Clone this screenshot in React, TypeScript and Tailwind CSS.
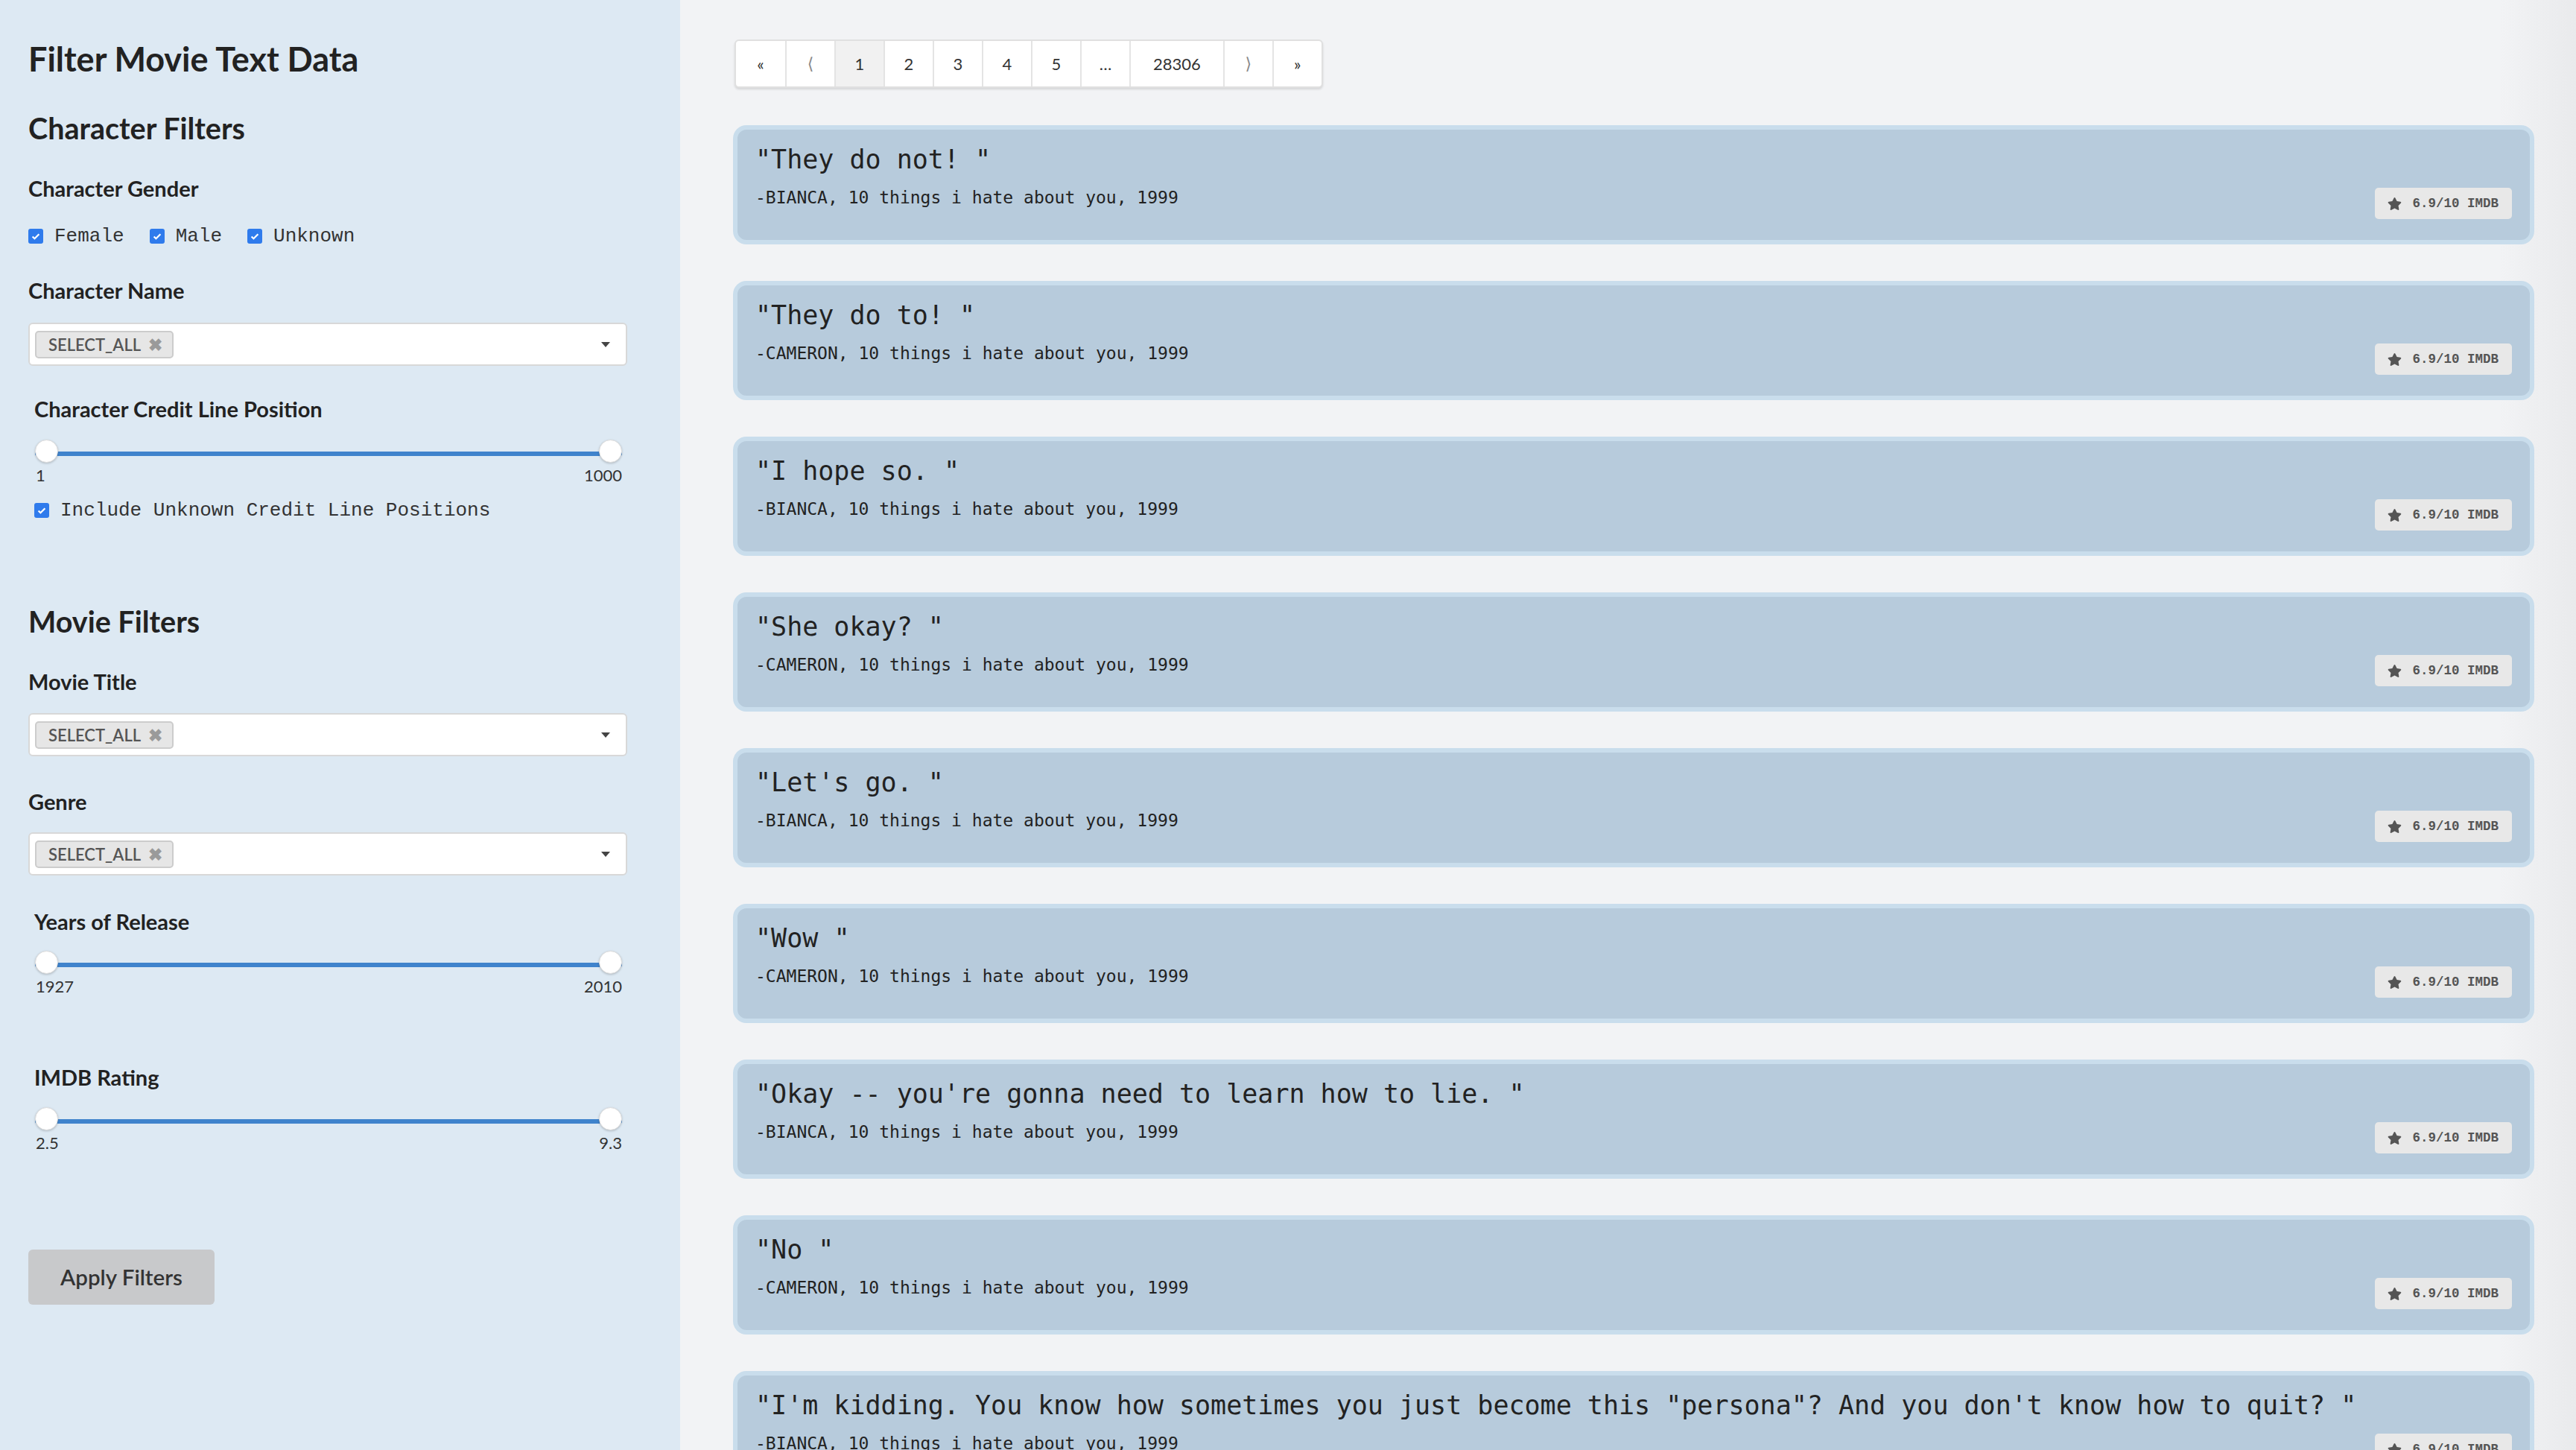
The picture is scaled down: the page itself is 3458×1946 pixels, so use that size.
import { FaStar } from "react-icons/fa";

interface quote {
  text: string;
  character: string;
}

const quotes: quote[] = [
  { text: "They do not! ", character: "BIANCA" },
  { text: "They do to! ", character: "CAMERON" },
  { text: "I hope so. ", character: "BIANCA" },
  { text: "She okay? ", character: "CAMERON" },
  { text: "Let's go. ", character: "BIANCA" },
  { text: "Wow ", character: "CAMERON" },
  { text: "Okay -- you're gonna need to learn how to lie. ", character: "BIANCA" },
  { text: "No ", character: "CAMERON" },
  {
    text: 'I\'m kidding. You know how sometimes you just become this "persona"? And you don\'t know how to quit? ',
    character: "BIANCA",
  },
];

const pages = ["«", "⟨", "1", "2", "3", "4", "5", "…", "28306", "⟩", "»"];

function Check() {
  return (
    <span className="flex h-[20px] w-[20px] shrink-0 items-center justify-center rounded-[3px] bg-[#2f7bec]">
      <svg viewBox="0 0 16 16" className="h-[14px] w-[14px]">
        <path d="M3 8.5l3.2 3.2L13 4.8" fill="none" stroke="white" strokeWidth="2.6" />
      </svg>
    </span>
  );
}

function CheckItem({ label }: { label: string }) {
  return (
    <label className="flex items-center gap-[15px]">
      <Check />
      <span className="font-['Liberation_Mono',monospace] text-[26px] leading-[34px] text-[#333]">
        {label}
      </span>
    </label>
  );
}

function SelectBox({ className }: { className: string }) {
  return (
    <div
      className={`flex h-[58px] w-[804px] shrink-0 items-center justify-between rounded-[6px] border-2 border-[#d8d8d8] bg-white pl-[7px] pr-[21px] ${className}`}
    >
      <span className="flex h-[37px] items-center gap-[10px] rounded-[5px] border-2 border-[#cccccc] bg-[#e6e6e6] pl-[16px] pr-[13px] text-[22px] font-semibold text-[#555]">
        SELECT_ALL
        <span className="text-[23px] leading-none text-[#9a9a9a]">✖</span>
      </span>
      <svg viewBox="0 0 12 7" className="h-[7px] w-[12px]">
        <path d="M0 0h12L6 7z" fill="#444" />
      </svg>
    </div>
  );
}

function RangeSlider({ min, max, className }: { min: string; max: string; className: string }) {
  return (
    <div className={`ml-[9px] w-[788px] shrink-0 ${className}`}>
      <div className="relative h-[32px]">
        <div className="absolute left-0 right-0 top-[16px] h-[6px] rounded-full bg-[#3f83cc]" />
        <div className="absolute left-0 top-0 h-[31px] w-[31px] rounded-full border border-[#dcdcdc] bg-white shadow-[0_1px_3px_rgba(0,0,0,0.2)]" />
        <div className="absolute right-0 top-0 h-[31px] w-[31px] rounded-full border border-[#dcdcdc] bg-white shadow-[0_1px_3px_rgba(0,0,0,0.2)]" />
      </div>
      <div className="mt-[3px] flex justify-between text-[22px] leading-[26px] text-[#333]">
        <span className="pl-[1px]">{min}</span>
        <span>{max}</span>
      </div>
    </div>
  );
}

function Sidebar() {
  return (
    <aside className="flex w-[913px] shrink-0 flex-col bg-[#dde9f3] pl-[38px] pt-[53px] font-['Lato',sans-serif] text-[#222]">
      <h1 className="text-[45px] font-bold leading-[52px]">Filter Movie Text Data</h1>
      <h2 className="mt-[44px] text-[39.5px] font-bold leading-[46px]">Character Filters</h2>
      <h3 className="mt-[41px] text-[29px] font-bold leading-[34px]">Character Gender</h3>
      <div className="mt-[30px] flex gap-[34px]">
        <CheckItem label="Female" />
        <CheckItem label="Male" />
        <CheckItem label="Unknown" />
      </div>
      <h3 className="mt-[39px] text-[29px] font-bold leading-[34px]">Character Name</h3>
      <SelectBox className="mt-[26px]" />
      <h3 className="ml-[8px] mt-[41px] text-[29px] font-bold leading-[34px]">
        Character Credit Line Position
      </h3>
      <RangeSlider min="1" max="1000" className="mt-[24px]" />
      <div className="ml-[8px] mt-[17px]">
        <CheckItem label="Include Unknown Credit Line Positions" />
      </div>

      <h2 className="mt-[109px] text-[39.5px] font-bold leading-[46px]">Movie Filters</h2>
      <h3 className="mt-[41px] text-[29px] font-bold leading-[34px]">Movie Title</h3>
      <SelectBox className="mt-[25px]" />
      <h3 className="mt-[44px] text-[29px] font-bold leading-[34px]">Genre</h3>
      <SelectBox className="mt-[24px]" />
      <h3 className="ml-[8px] mt-[45px] text-[29px] font-bold leading-[34px]">Years of Release</h3>
      <RangeSlider min="1927" max="2010" className="mt-[22px]" />
      <h3 className="ml-[8px] mt-[92px] text-[29px] font-bold leading-[34px]">IMDB Rating</h3>
      <RangeSlider min="2.5" max="9.3" className="mt-[23px]" />

      <button className="mt-[130px] h-[74px] w-[250px] shrink-0 rounded-[6px] bg-[#c8c9cb] text-[29.5px] font-semibold text-[#333]">
        Apply Filters
      </button>
    </aside>
  );
}

function Pagination() {
  return (
    <div className="ml-[2px] flex w-fit shrink-0 overflow-hidden rounded-[6px] border-2 border-[#e0e0e0] bg-white shadow-[0_2px_3px_rgba(0,0,0,0.12)] font-['Lato',sans-serif]">
      {pages.map((p, i) => (
        <span
          key={i}
          className={`flex h-[61px] items-center justify-center text-[22px] text-[#333] ${
            i > 0 ? "border-l-2 border-[#e4e4e4]" : ""
          } ${p === "28306" ? "px-[30px]" : "w-[66px]"} ${p === "1" ? "bg-[#f1f1f1]" : ""} ${
            p === "⟨" || p === "⟩" ? "font-['DejaVu_Sans',sans-serif] text-[#888]" : ""
          }`}
        >
          {p}
        </span>
      ))}
    </div>
  );
}

function QuoteCard({ q }: { q: quote }) {
  return (
    <div className="h-[160px] shrink-0 rounded-[18px] border-[6px] border-[#c9ddec] bg-[#b7cbdc] px-[24px] pt-[20px]">
      <p className="whitespace-nowrap font-['DejaVu_Sans_Mono',monospace] text-[35px] leading-[41px] text-[#222]">
        "{q.text}"
      </p>
      <div className="mt-[17px] flex items-start justify-between">
        <span className="font-['DejaVu_Sans_Mono',monospace] text-[23px] leading-[27px] text-[#222]">
          -{q.character}, 10 things i hate about you, 1999
        </span>
        <span className="flex h-[42px] items-center gap-[14px] rounded-[5px] bg-[#e8e8e8] pl-[17px] pr-[18px] font-['Liberation_Mono',monospace] text-[17.5px] font-bold text-[#555]">
          <FaStar className="h-[19px] w-[19px] text-[#555]" />
          6.9/10 IMDB
        </span>
      </div>
    </div>
  );
}

export default function App() {
  return (
    <div className="flex h-screen overflow-hidden bg-[#f2f3f5]">
      <Sidebar />
      <main className="flex min-w-0 flex-1 flex-col bg-[linear-gradient(to_right,#f2f3f5_0%,#f2f3f5_96%,#e9eaec_100%)] pl-[71px] pr-[56px] pt-[53px]">
        <Pagination />
        <div className="mt-[50px] flex shrink-0 flex-col gap-[49px]">
          {quotes.map((q, i) => (
            <QuoteCard key={i} q={q} />
          ))}
        </div>
      </main>
    </div>
  );
}
